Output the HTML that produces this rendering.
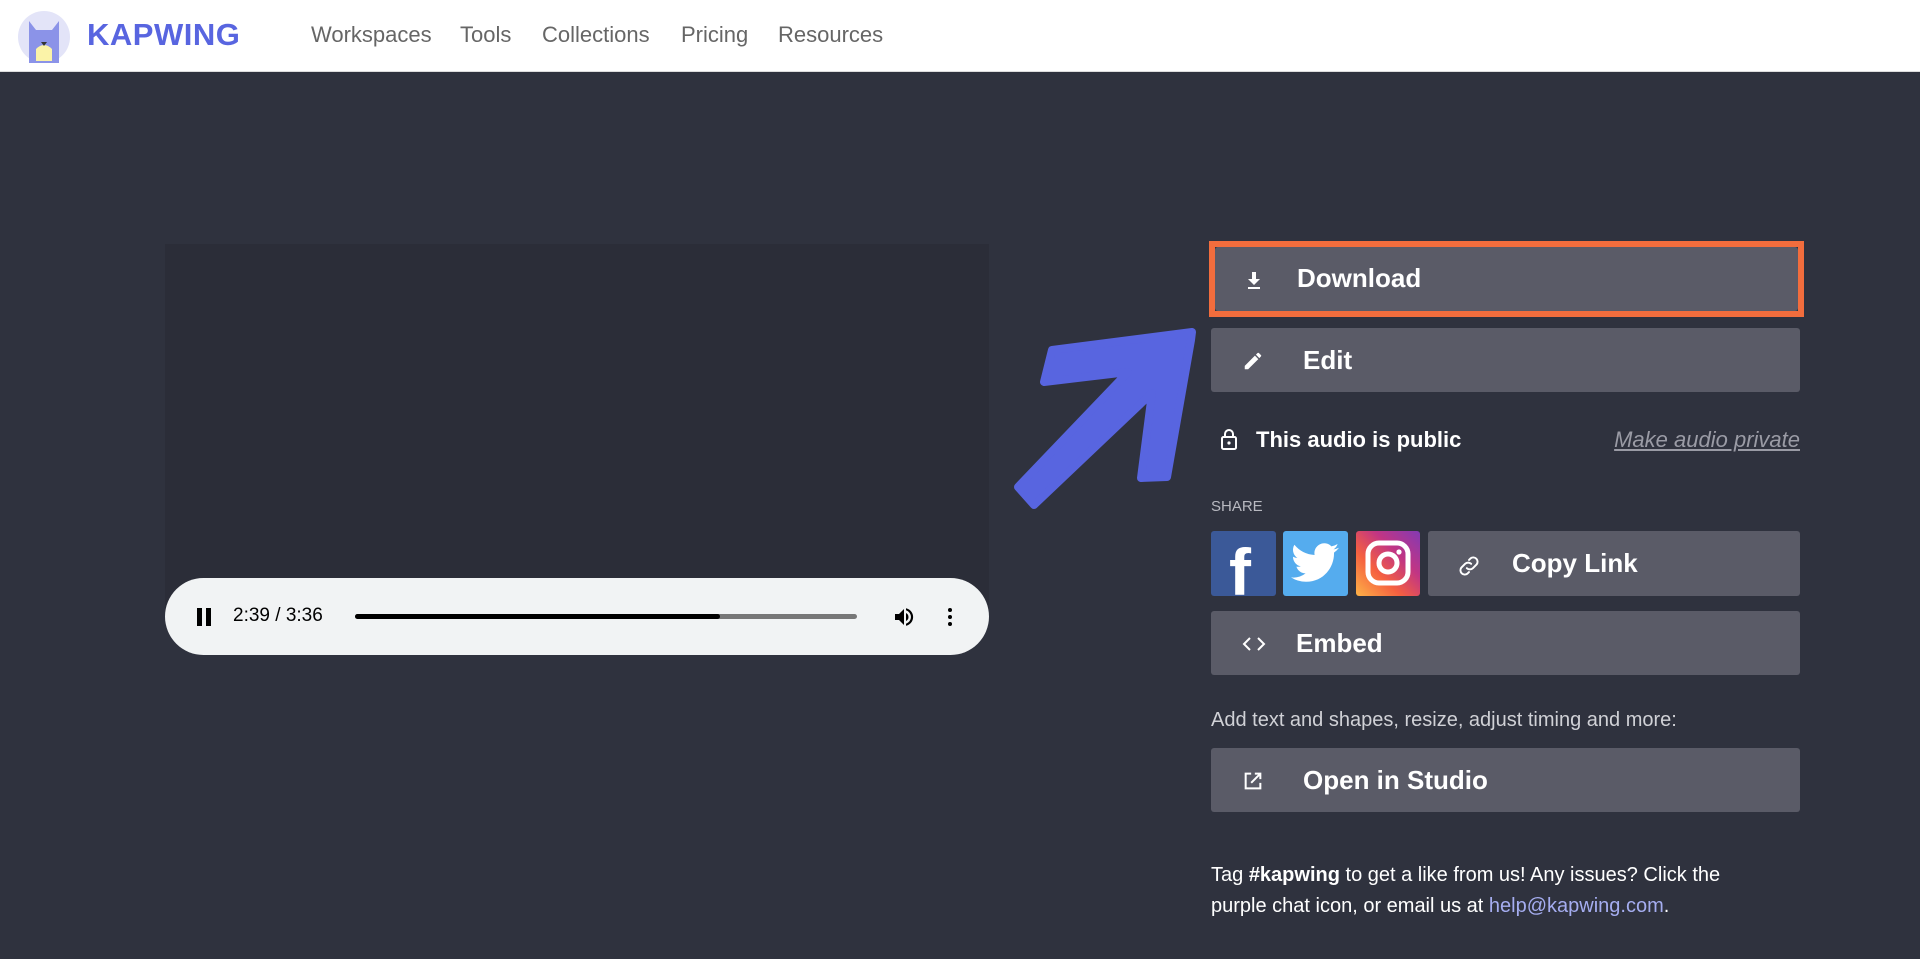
<!DOCTYPE html>
<html><head><meta charset="utf-8"><style>
*{margin:0;padding:0;box-sizing:border-box}
body{width:1920px;height:959px;background:#2f323e;font-family:"Liberation Sans",sans-serif;overflow:hidden;position:relative}
.nav{position:absolute;left:0;top:0;width:1920px;height:72px;background:#fff;border-bottom:1px solid #ddd}
.nav a{position:absolute;top:22px;font-size:22px;color:#666;text-decoration:none}
.btn{position:absolute;left:1211px;width:589px;height:64px;background:#5a5b67;border-radius:3px;color:#fff;font-size:26px;font-weight:bold}
.btn span{position:absolute;top:17px}
.btn svg{position:absolute;top:22px;left:31px}
.ab{position:absolute}
</style></head><body>
<div class="nav">
  <svg class="ab" style="left:18px;top:11px" width="52" height="52" viewBox="0 0 52 52">
    <circle cx="26" cy="26" r="26" fill="#e3e4f8"/>
    <path d="M11 10 L18 19 L34 19 L41 10 L41 52 L11 52Z" fill="#8b93e8"/>
    <path d="M18 38 Q26 30 34 38 L34 50 L18 50Z" fill="#fbf3a8"/>
    <path d="M23 31 L29 31 L26 35Z" fill="#333"/>
  </svg>
  <div class="ab" style="left:87px;top:17px;font-size:31px;font-weight:bold;color:#5865e0;letter-spacing:0.5px">KAPWING</div>
  <a style="left:311px">Workspaces</a><a style="left:460px">Tools</a><a style="left:542px">Collections</a><a style="left:681px">Pricing</a><a style="left:778px">Resources</a>
</div>

<div class="ab" style="left:165px;top:244px;width:824px;height:411px;background:#2b2d38;border-radius:0 0 39px 39px"></div>
<div class="ab" style="left:165px;top:578px;width:824px;height:77px;background:#f1f3f4;border-radius:39px">
  <div class="ab" style="left:32px;top:30px;width:5px;height:18px;background:#000"></div>
  <div class="ab" style="left:41px;top:30px;width:5px;height:18px;background:#000"></div>
  <div class="ab" style="left:68px;top:27px;font-size:19px;color:#000">2:39 / 3:36</div>
  <div class="ab" style="left:190px;top:36px;width:502px;height:5px;background:#777;border-radius:3px"></div>
  <div class="ab" style="left:190px;top:36px;width:365px;height:5px;background:#000;border-radius:3px"></div>
  <svg class="ab" style="left:727px;top:27px" width="24" height="24" viewBox="0 0 24 24"><path d="M3 9v6h4l5 5V4L7 9H3zm13.5 3A4.5 4.5 0 0 0 14 8v8a4.5 4.5 0 0 0 2.5-4zM14 3.2v2.1a7 7 0 0 1 0 13.4v2.1a9 9 0 0 0 0-17.6z" fill="#000"/></svg>
  <div class="ab" style="left:783px;top:30px;width:4px;height:4px;background:#000;border-radius:2px;box-shadow:0 7px 0 #000,0 14px 0 #000"></div>
</div>

<svg class="ab" style="left:0;top:0" width="1920" height="959"><polygon points="1192,332 1052,350 1044,382 1128,372 1018,487 1034,505 1152,393 1141,478 1167,477 1191,340" fill="#5865e0" stroke="#5865e0" stroke-width="8" stroke-linejoin="round"/></svg>

<div class="ab" style="left:1209px;top:241px;width:595px;height:76px;border:6px solid #f26d3d"></div>
<div class="btn" style="top:247px;left:1215px;width:583px;height:64px"><svg style="left:29px;top:23px" width="20" height="20" viewBox="0 0 20 20"><path d="M8 2h4v7h4l-6 6-6-6h4z M4 17h12v2H4z" fill="#fff"/></svg><span style="left:82px;top:16px">Download</span></div>
<div class="btn" style="top:328px"><svg width="22" height="22" viewBox="0 0 24 24"><path d="M3 17.3V21h3.7L17.8 9.9l-3.7-3.7zM20.7 7a1 1 0 0 0 0-1.4l-2.3-2.3a1 1 0 0 0-1.4 0l-1.8 1.8 3.7 3.7z" fill="#fff"/></svg><span style="left:92px">Edit</span></div>

<svg class="ab" style="left:1220px;top:428px" width="18" height="22" viewBox="0 0 18 22"><rect x="2" y="9" width="14" height="12" rx="1.5" fill="none" stroke="#fff" stroke-width="2"/><path d="M5 9V6a4 4 0 0 1 8 0v3" fill="none" stroke="#fff" stroke-width="2"/><circle cx="9" cy="15" r="1.6" fill="#fff"/></svg>
<div class="ab" style="left:1256px;top:427px;font-size:22px;font-weight:bold;color:#fff">This audio is public</div>
<div class="ab" style="right:120px;top:427px;font-size:22px;font-style:italic;color:#9a9ba5;text-decoration:underline">Make audio private</div>

<div class="ab" style="left:1211px;top:498px;font-size:15px;color:#b8b9c0">SHARE</div>
<div class="ab" style="left:1211px;top:531px;width:65px;height:65px;background:#3b5998;border-radius:3px;overflow:hidden"><div class="ab" style="left:18px;top:8px;font-size:66px;font-weight:bold;color:#fff;line-height:66px">f</div></div>
<div class="ab" style="left:1283px;top:531px;width:65px;height:65px;background:#55acee;border-radius:3px"><svg style="position:absolute;left:8px;top:10px" width="48" height="44" viewBox="0 0 24 20"><path d="M24 2.4a9.8 9.8 0 0 1-2.8.8 4.9 4.9 0 0 0 2.1-2.7 9.8 9.8 0 0 1-3.1 1.2A4.9 4.9 0 0 0 11.8 6 14 14 0 0 1 1.7.9a4.9 4.9 0 0 0 1.5 6.6A4.9 4.9 0 0 1 1 6.9a4.9 4.9 0 0 0 3.9 4.8 4.9 4.9 0 0 1-2.2.1 4.9 4.9 0 0 0 4.6 3.4A9.9 9.9 0 0 1 0 17.2 14 14 0 0 0 7.5 19.4c9.1 0 14-7.5 14-14v-.6A10 10 0 0 0 24 2.4z" fill="#fff"/></svg></div>
<div class="ab" style="left:1356px;top:531px;width:64px;height:65px;border-radius:3px;background:linear-gradient(45deg,#fdb347 0%,#f56040 35%,#c13584 65%,#833ab4 100%)"><svg style="position:absolute;left:9px;top:9px" width="46" height="46" viewBox="0 0 46 46"><rect x="3" y="3" width="40" height="40" rx="11" fill="none" stroke="#fff" stroke-width="5"/><circle cx="23" cy="23" r="9" fill="none" stroke="#fff" stroke-width="5"/><circle cx="34" cy="12" r="2.6" fill="#fff"/></svg></div>
<div class="btn" style="top:531px;left:1428px;width:372px;height:65px"><svg style="left:28px" width="26" height="26" viewBox="0 0 24 24"><path d="M10 14a4 4 0 0 0 5.6 0l3.5-3.5a4 4 0 0 0-5.6-5.6L12 6.4M14 10a4 4 0 0 0-5.6 0l-3.5 3.5a4 4 0 0 0 5.6 5.6L12 17.6" fill="none" stroke="#fff" stroke-width="1.8" stroke-linecap="round"/></svg><span style="left:84px">Copy Link</span></div>
<div class="btn" style="top:611px"><svg style="left:31px;top:23px" width="24" height="20" viewBox="0 0 24 20"><path d="M8 4 2 10l6 6M16 4l6 6-6 6" fill="none" stroke="#fff" stroke-width="2"/></svg><span style="left:85px">Embed</span></div>

<div class="ab" style="left:1211px;top:709px;font-size:20px;color:#d0d1d6">Add text and shapes, resize, adjust timing and more:</div>
<div class="btn" style="top:748px"><svg width="22" height="22" viewBox="0 0 24 24"><path d="M10 4H4v16h16v-6M14 4h6v6M20 4 10 14" fill="none" stroke="#fff" stroke-width="2.2"/></svg><span style="left:92px">Open in Studio</span></div>

<div class="ab" style="left:1211px;top:860px;width:560px;font-size:20px;line-height:31px;color:#fff">Tag <b>#kapwing</b> to get a like from us! Any issues? Click the purple chat icon, or email us at <span style="color:#a5adf0">help@kapwing.com</span>.</div>
</body></html>
